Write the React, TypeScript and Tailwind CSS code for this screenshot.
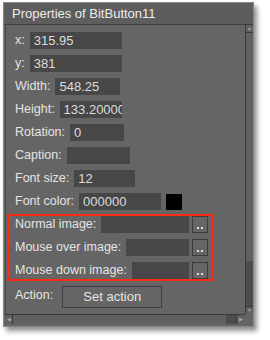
import React from "react"

const font = { fontFamily: '"Liberation Sans", Arial, sans-serif' }

function Field({ label, value = "", w }: { label: string; value?: string; w: string }) {
  return (
    <div className="flex items-center h-[23px] gap-[5px]">
      <span className="text-[12.5px] text-[#e4e4e4] whitespace-nowrap">{label}</span>
      <div className={`${w} h-[17px] bg-[#474747] text-[13px] text-[#dcdcdc] leading-[17px] pl-[4px] overflow-hidden whitespace-nowrap`}>
        {value}
      </div>
    </div>
  )
}

function ImageField({ label, w }: { label: string; w: string }) {
  return (
    <div className="flex items-center h-[17px] gap-[5px]">
      <span className="text-[12.5px] text-[#e4e4e4] whitespace-nowrap">{label}</span>
      <div className={`${w} h-[17px] bg-[#474747]`} />
      <div className="w-[16px] h-[17px] border border-[#3c3c3c] flex items-end justify-center pb-[3px] gap-[2px] -ml-[2px]">
        <span className="w-[2px] h-[2px] bg-[#e0e0e0]" />
        <span className="w-[2px] h-[2px] bg-[#e0e0e0]" />
      </div>
    </div>
  )
}

export default function App() {
  return (
    <div className="w-[270px] h-[340px] bg-white pt-[2px] pl-[3px]" style={font}>
      <div className="w-[251px] h-[325px] bg-[#656565] border border-[#888] shadow-[3px_4px_5px_rgba(0,0,0,0.45)] flex flex-col">
        {/* title */}
        <div className="h-[22px] bg-[#5d5d5d] border-b border-[#3e3e3e] pl-[8px] flex items-center">
          <span className="text-[13px] text-[#ececec]">Properties of BitButton11</span>
        </div>
        <div className="flex flex-1 ml-[1px] border-l border-[#4a4a4a]">
          <div className="flex-1 pt-[4px] flex flex-col">
            <div className="pl-[9px] flex flex-col">
              <Field label="x:" value="315.95" w="w-[92px]" />
              <Field label="y:" value="381" w="w-[92px]" />
              <Field label="Width:" value="548.25" w="w-[65px]" />
              <Field label="Height:" value="133.20000" w="w-[62px]" />
              <Field label="Rotation:" value="0" w="w-[54px]" />
              <Field label="Caption:" value="" w="w-[63px]" />
              <Field label="Font size:" value="12" w="w-[61px]" />
              <div className="flex items-center h-[23px] gap-[5px]">
                <span className="text-[12.5px] text-[#e4e4e4]">Font color:</span>
                <div className="w-[82px] h-[17px] bg-[#474747] text-[13px] text-[#dcdcdc] leading-[17px] pl-[4px]">000000</div>
                <div className="w-[16px] h-[16px] bg-black" />
              </div>
            </div>
            <div className="ml-[1px] w-[207px] border-2 border-[#ff2a12] pl-[6px] flex flex-col gap-[6px] mt-[1px]">
              <ImageField label="Normal image:" w="w-[88px]" />
              <ImageField label="Mouse over image:" w="w-[63px]" />
              <ImageField label="Mouse down image:" w="w-[57px]" />
            </div>
            <div className="flex items-center pl-[9px] gap-[9px] mt-[5px]">
              <span className="text-[12.5px] text-[#e4e4e4] -mt-[4px]">Action:</span>
              <div className="w-[100px] h-[22px] border border-[#3e3e3e] flex items-center justify-center text-[13px] text-[#e4e4e4]">
                Set action
              </div>
            </div>
          </div>
          {/* vertical scrollbar */}
          <div className="w-[8px] border-l border-[#3a3a3a] flex flex-col bg-[#616161]">
            <div className="h-[8px] flex items-center justify-center text-[5px] text-[#aaa] border-b border-[#3a3a3a]">▲</div>
            <div className="flex-1 flex flex-col justify-end">
              <div className="h-[45px] bg-[#4d4d4d]" />
            </div>
            <div className="h-[8px] flex items-center justify-center text-[5px] text-[#aaa] border-t border-[#3a3a3a]">▼</div>
          </div>
        </div>
        {/* horizontal scrollbar */}
        <div className="h-[10px] flex border-t border-[#3a3a3a] bg-[#616161] mb-[2px] mr-[8px] ml-[1px]">
          <div className="w-[8px] flex items-center justify-center text-[5px] text-[#aaa] border-r border-[#3a3a3a]">◀</div>
          <div className="flex-1 flex justify-end">
            <div className="w-[10px] bg-[#4d4d4d]" />
          </div>
          <div className="w-[9px] flex items-center justify-center text-[5px] text-[#aaa] border-l border-[#3a3a3a]">▶</div>
        </div>
      </div>
    </div>
  )
}
